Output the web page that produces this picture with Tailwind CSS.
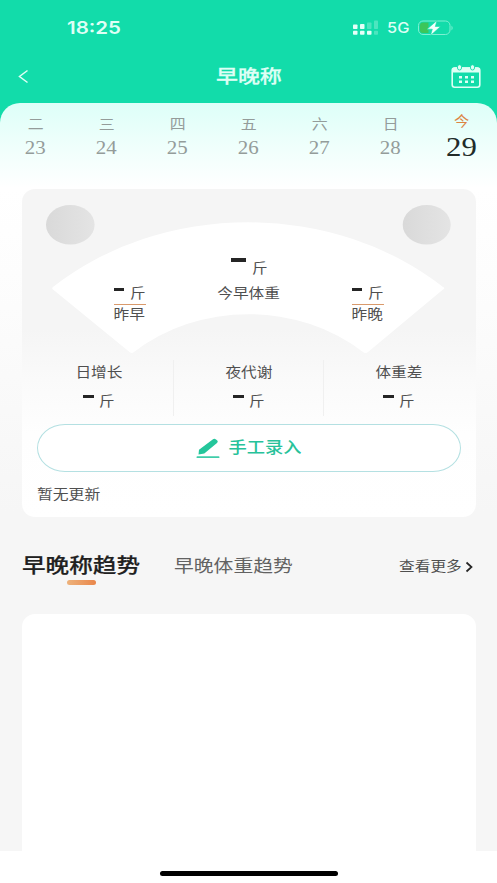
<!DOCTYPE html>
<html lang="zh-CN">
<head>
<meta charset="utf-8">
<title>早晚称</title>
<script src="https://cdn.jsdelivr.net/npm/@tailwindcss/browser@4"></script>
</head>
<body class="w-[497px] h-[883px] overflow-hidden bg-white font-['Liberation_Sans','Noto_Sans_CJK_SC',sans-serif] text-[#4f4f4f]">
<div class="flex h-[883px] flex-col bg-white whitespace-nowrap">
  <div class="h-[851px] shrink-0 bg-[#12dcaa]">
    <!-- status bar -->
    <div class="flex h-[56px] items-center pl-[67px]">
      <span class="inline-block w-[54px] origin-left scale-x-[1.17] text-[17.5px] font-semibold leading-none text-[#defff5] font-[Inter]">18:25</span>
      <svg class="ml-[231px] h-[16px] w-[27px]" viewBox="0 0 27 16" fill="#e6fff8">
        <rect x="1" y="4.500" width="4.500" height="4.500" rx=".8"/><rect x="8" y="4" width="4.500" height="5" rx=".8"/>
        <rect x="1" y="10.800" width="4.500" height="4" rx=".8"/><rect x="8" y="10.800" width="4.500" height="4" rx=".8"/><rect x="15" y="10.800" width="4.500" height="4" rx=".8"/>
        <g opacity=".28"><rect x="15" y="2.500" width="4.500" height="6.500" rx=".8"/><rect x="22" y=".5" width="4" height="8.500" rx=".8"/><rect x="22" y="10.800" width="4" height="4" rx=".8"/></g>
      </svg>
      <span class="ml-[8px] inline-block w-[22px] origin-left scale-x-[1.13] text-[14.500px] font-medium leading-none text-[#defff5] font-[Inter]">5G</span>
      <svg class="ml-[8px] h-[18px] w-[37px]" viewBox="0 0 37 18">
        <rect x="1.500" y="2" width="31.500" height="13.500" rx="4.500" fill="none" stroke="#7df0d2"/>
        <path d="M6 3.500H11.500V14H6Q3 14 3 11.500V6.500Q3 3.500 6 3.500Z" fill="#3cc65a"/>
        <path d="M34.500 6.500Q36.800 9 34.500 11.500Z" fill="#7df0d2"/>
        <path d="M20 1.500L10 10.200H15.300L13.500 16.500L23.500 7.500H18.300Z" fill="#f2fffb" stroke="#12dcaa" stroke-width=".6"/>
      </svg>
    </div>
    <!-- title bar -->
    <div class="flex h-[47px] items-center justify-between pr-[16px] pl-[17px] pb-[6px]">
      <svg class="h-[16px] w-[30px]" viewBox="0 0 30 16" fill="none" stroke="#defff5" stroke-width="1.500"><path d="M10.500 1.500L2.500 7.500L10.500 13.500"/></svg>
      <h1 class="relative top-px scale-x-[1.18] text-[18.600px] leading-none font-medium text-[#defff5] [-webkit-text-stroke:0.3px_#defff5]">早晚称</h1>
      <svg class="h-[25px] w-[30px]" viewBox="0 0 30 25" fill="none">
        <rect x="1.200" y="4" width="27.600" height="19.300" rx="2.500" stroke="#defff5" stroke-width="1.600"/>
        <path d="M1 8.500V6Q1 3.200 4 3.200H26Q29 3.200 29 6V8.500Z" fill="#defff5"/>
        <g fill="#defff5" stroke="#12dcaa" stroke-width=".9"><rect x="6.500" y=".7" width="4" height="5.300" rx="2"/><rect x="19.500" y=".7" width="4" height="5.300" rx="2"/></g>
        <path d="M8 13.200H23M8 17.700H23" stroke="#defff5" stroke-width="2.500" stroke-dasharray="3 3"/>
      </svg>
    </div>
    <main class="h-[748px] rounded-t-[20px] bg-[linear-gradient(180deg,#ddfff8_0px,#ecfffb_35px,#ffffff_85px,#fdfdfd_170px,#f6f6f6_410px)]">
      <!-- days -->
      <div class="grid h-[86px] grid-cols-7 text-center font-['Liberation_Serif','Noto_Sans_CJK_SC',serif] text-[#949c9a]">
        <div class="flex flex-col items-center pt-[14px]"><span class="scale-x-[1.18] text-[13.500px] leading-[16px]">二</span><span class="mt-[5px] scale-x-[1.13] text-[18.500px] leading-[20px]">23</span></div>
        <div class="flex flex-col items-center pt-[14px]"><span class="scale-x-[1.18] text-[13.500px] leading-[16px]">三</span><span class="mt-[5px] scale-x-[1.13] text-[18.500px] leading-[20px]">24</span></div>
        <div class="flex flex-col items-center pt-[14px]"><span class="scale-x-[1.18] text-[13.500px] leading-[16px]">四</span><span class="mt-[5px] scale-x-[1.13] text-[18.500px] leading-[20px]">25</span></div>
        <div class="flex flex-col items-center pt-[14px]"><span class="scale-x-[1.18] text-[13.500px] leading-[16px]">五</span><span class="mt-[5px] scale-x-[1.13] text-[18.500px] leading-[20px]">26</span></div>
        <div class="flex flex-col items-center pt-[14px]"><span class="scale-x-[1.18] text-[13.500px] leading-[16px]">六</span><span class="mt-[5px] scale-x-[1.13] text-[18.500px] leading-[20px]">27</span></div>
        <div class="flex flex-col items-center pt-[14px]"><span class="scale-x-[1.18] text-[13.500px] leading-[16px]">日</span><span class="mt-[5px] scale-x-[1.13] text-[18.500px] leading-[20px]">28</span></div>
        <div class="flex flex-col items-center pt-[11px]"><span class="scale-x-[1.13] text-[13.500px] leading-[16px] text-[#dc8443]">今</span><span class="mt-[2px] scale-x-[1.14] text-[27px] leading-[30px] text-[#222b29]">29</span></div>
      </div>
      <!-- weight card -->
      <section class="mx-auto h-[328px] w-[454px] rounded-[13px] bg-[linear-gradient(180deg,#f5f5f5_0px,#f5f5f5_140px,#fafafa_190px,#fefefe_245px,#ffffff_328px)]">
        <div class="relative h-[171px]">
          <svg class="absolute inset-0 h-[171px] w-[454px]" viewBox="22 189 454 171">
            <defs><linearGradient id="knob"><stop stop-color="#d9d9d9"/><stop offset="1" stop-color="#e4e4e4"/></linearGradient></defs>
            <ellipse cx="70.300" cy="224.700" rx="24.300" ry="19.700" fill="url(#knob)"/>
            <ellipse cx="426.700" cy="224.700" rx="24" ry="19.700" fill="url(#knob)"/>
            <path d="M53 287A284 237 0 0 1 443 287Q445.500 288 443 289.500L368 352Q365.500 354 363 352A167 139 0 0 0 134 352Q132 354 129.500 352L53 289.500Q51.500 288 53 287Z" fill="#fff"/>
          </svg>
          <div class="relative flex h-full justify-between pr-[92px] pl-[92px]">
            <div class="flex w-[32px] flex-col items-center pt-[95px]">
              <div class="flex h-[21px] w-full items-center justify-between border-b-[1.500px] border-[#d99a6c]"><i class="mb-[10px] h-[3px] w-[10px] bg-[#252525]"></i><span class="mr-[1px] scale-x-[1.150] text-[13.500px] leading-none">斤</span></div>
              <span class="mt-[3px] scale-x-[1.18] text-[13.300px] leading-[14px]">昨早</span>
            </div>
            <div class="flex w-[64px] flex-col items-center pt-[69px]">
              <div class="flex h-[20px] w-[38px] items-start justify-between"><i class="ml-px h-[4px] w-[15px] bg-[#252525]"></i><span class="mt-[4px] mr-[1px] scale-x-[1.150] text-[13.500px] leading-none">斤</span></div>
              <span class="mt-[9px] scale-x-[1.18] text-[13.300px] leading-[14px]">今早体重</span>
            </div>
            <div class="flex w-[32px] flex-col items-center pt-[95px]">
              <div class="flex h-[21px] w-full items-center justify-between border-b-[1.500px] border-[#d99a6c]"><i class="mb-[10px] h-[3px] w-[10px] bg-[#252525]"></i><span class="mr-[1px] scale-x-[1.150] text-[13.500px] leading-none">斤</span></div>
              <span class="mt-[3px] scale-x-[1.18] text-[13.300px] leading-[14px]">昨晚</span>
            </div>
          </div>
        </div>
        <div class="mx-[2px] grid h-[56px] grid-cols-3 divide-x divide-[#f0f0f0]">
          <div class="flex flex-col items-center pt-[6px] pl-px"><span class="scale-x-[1.18] text-[13.300px] leading-[14px]">日增长</span><div class="mt-[13px] flex w-[32px] items-start justify-between"><i class="mt-[2px] h-[3px] w-[11px] bg-[#252525]"></i><span class="mr-[1px] mt-[2px] scale-x-[1.150] text-[13.500px] leading-none">斤</span></div></div>
          <div class="flex flex-col items-center pt-[6px] pl-px"><span class="scale-x-[1.18] text-[13.300px] leading-[14px]">夜代谢</span><div class="mt-[13px] flex w-[32px] items-start justify-between"><i class="mt-[2px] h-[3px] w-[11px] bg-[#252525]"></i><span class="mr-[1px] mt-[2px] scale-x-[1.150] text-[13.500px] leading-none">斤</span></div></div>
          <div class="flex flex-col items-center pt-[6px]"><span class="scale-x-[1.18] text-[13.300px] leading-[14px]">体重差</span><div class="mt-[13px] flex w-[32px] items-start justify-between"><i class="mt-[2px] h-[3px] w-[11px] bg-[#252525]"></i><span class="mr-[1px] mt-[2px] scale-x-[1.150] text-[13.500px] leading-none">斤</span></div></div>
        </div>
        <button class="mx-auto mt-[8px] flex h-[48px] w-[424px] items-center justify-center rounded-[28px/24px] border border-[#b4e0e2] bg-white text-[#27c29a]">
          <svg class="ml-[2px] h-[21px] w-[24px]" viewBox="0 0 24 21"><path d="M2.500 16.500L3 11.800L17 1.200Q18.500 0 20 1.500L21.300 2.600Q22.500 3.700 21 5L8.300 15.500Z" fill="#24c69b"/><rect x=".5" y="18.300" width="23" height="1.800" rx=".9" fill="#40cda9"/></svg>
          <span class="mr-[6px] ml-[14px] scale-x-[1.180] text-[15.500px] leading-none font-medium">手工录入</span>
        </button>
        <div class="mt-[16px] ml-[15px] w-fit origin-left scale-x-[1.18] text-[13.400px] leading-[14px]">暂无更新</div>
      </section>
      <!-- trend tabs -->
      <div class="flex h-[97px] items-start pt-[36px] pr-[24px] pl-[22px]">
        <div class="relative w-[118px]"><span class="inline-block origin-left scale-x-[1.180] text-[20px] leading-[26px] font-medium text-[#202020] [-webkit-text-stroke:0.2px_#202020]">早晚称趋势</span><i class="absolute top-[27px] left-[45px] h-[5px] w-[29px] rounded-full bg-linear-to-r from-[#edb27b] to-[#e9864a]"></i></div>
        <span class="ml-[34px] w-[118px] pt-px text-[16.800px] leading-[26px] text-[#626262]"><span class="inline-block origin-left scale-x-[1.180]">早晚体重趋势</span></span>
        <span class="ml-auto flex w-[74px] items-center justify-between pt-px text-[13.300px] leading-[26px]"><span class="origin-left scale-x-[1.180]">查看更多</span><svg class="h-[12px] w-[8px]" viewBox="0 0 8 12" fill="none" stroke="#252525" stroke-width="1.700"><path d="M1.500 1.500L6.500 6L1.500 10.500"/></svg></span>
      </div>
      <section class="mx-auto h-[237px] w-[454px] rounded-t-[13px] bg-white"></section>
    </main>
  </div>
  <div class="flex h-[32px] items-center justify-center pt-[12px]"><div class="h-[5px] w-[178px] rounded-full bg-black"></div></div>
</div>
</body>
</html>
